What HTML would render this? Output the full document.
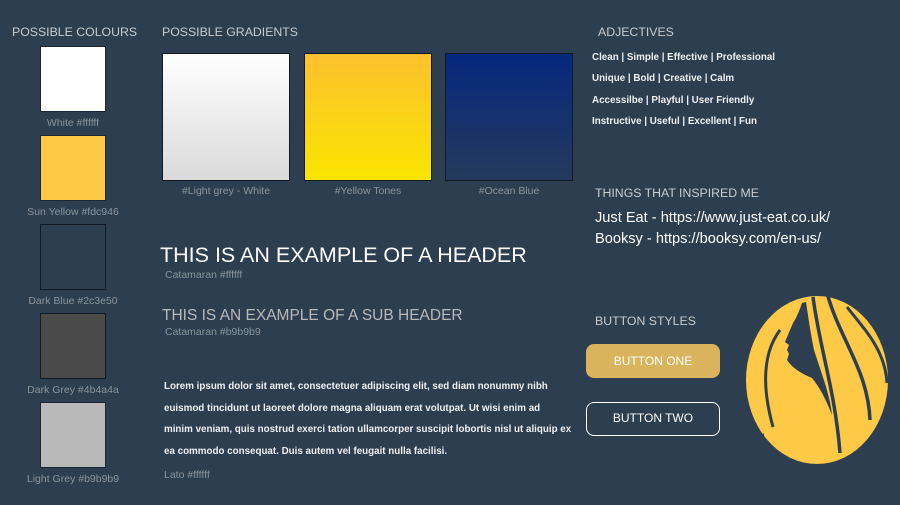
<!DOCTYPE html>
<html><head><meta charset="utf-8"><style>
*{margin:0;padding:0;box-sizing:border-box}
body{width:900px;height:505px;background:#2c3e50;position:relative;overflow:hidden;font-family:"Liberation Sans",sans-serif}
.a{position:absolute;white-space:nowrap}
.h{color:#c9ccd0;font-size:12.3px}
.cap{color:#8c949c;font-size:10.5px;text-align:center}
.sw{position:absolute;width:66px;height:66px;border:1px solid #1a2633}
.gr{position:absolute;width:128px;height:128px;border:1px solid #111a24}
.adj{color:#f0f0f0;font-size:9.8px;font-weight:bold;left:592px}
.p{color:#f0f0f0;font-size:9.8px;font-weight:bold;left:164px}
.btn{position:absolute;left:586px;width:134px;height:34px;border-radius:8px;color:#fff;font-size:12px;text-align:center;line-height:34px}
</style></head><body>
<div class="a h" style="left:12px;top:25px">POSSIBLE COLOURS</div>
<div class="a h" style="left:162px;top:25px">POSSIBLE GRADIENTS</div>
<div class="a h" style="left:598px;top:25px">ADJECTIVES</div>

<div class="sw" style="left:40px;top:46px;background:#fff"></div>
<div class="a cap" style="left:20px;width:106px;top:117px">White #ffffff</div>
<div class="sw" style="left:40px;top:135px;background:#fdc946"></div>
<div class="a cap" style="left:13px;width:120px;top:206px">Sun Yellow #fdc946</div>
<div class="sw" style="left:40px;top:224px;background:#2c3e50;border-color:#111a24"></div>
<div class="a cap" style="left:13px;width:120px;top:295px">Dark Blue #2c3e50</div>
<div class="sw" style="left:40px;top:313px;background:#4b4a4a;border-color:#111a24"></div>
<div class="a cap" style="left:13px;width:120px;top:384px">Dark Grey #4b4a4a</div>
<div class="sw" style="left:40px;top:402px;background:#b9b9b9"></div>
<div class="a cap" style="left:13px;width:120px;top:473px">Light Grey #b9b9b9</div>

<div class="gr" style="left:162px;top:53px;background:linear-gradient(#fff,#dadada)"></div>
<div class="a cap" style="left:162px;width:128px;top:185px">#Light grey - White</div>
<div class="gr" style="left:304px;top:53px;background:linear-gradient(#fcc12e,#f9e500)"></div>
<div class="a cap" style="left:304px;width:128px;top:185px">#Yellow Tones</div>
<div class="gr" style="left:445px;top:53px;background:linear-gradient(#06287f,#243a5c)"></div>
<div class="a cap" style="left:445px;width:128px;top:185px">#Ocean Blue</div>

<div class="a" style="left:160px;top:243px;color:#fff;font-size:21.5px">THIS IS AN EXAMPLE OF A HEADER</div>
<div class="a cap" style="left:165px;top:269px">Catamaran #ffffff</div>
<div class="a" style="left:162px;top:307px;color:#b9b9b9;font-size:15.5px">THIS IS AN EXAMPLE OF A SUB HEADER</div>
<div class="a cap" style="left:165px;top:326px">Catamaran #b9b9b9</div>

<div class="a p" style="top:381px">Lorem ipsum dolor sit amet, consectetuer adipiscing elit, sed diam nonummy nibh</div>
<div class="a p" style="top:403px">euismod tincidunt ut laoreet dolore magna aliquam erat volutpat. Ut wisi enim ad</div>
<div class="a p" style="top:424px">minim veniam, quis nostrud exerci tation ullamcorper suscipit lobortis nisl ut aliquip ex</div>
<div class="a p" style="top:446px">ea commodo consequat. Duis autem vel feugait nulla facilisi.</div>
<div class="a cap" style="left:164px;top:469px">Lato #ffffff</div>

<div class="a adj" style="top:52px">Clean | Simple | Effective | Professional</div>
<div class="a adj" style="top:73px">Unique | Bold | Creative | Calm</div>
<div class="a adj" style="top:95px">Accessilbe | Playful | User Friendly</div>
<div class="a adj" style="top:116px">Instructive | Useful | Excellent | Fun</div>

<div class="a h" style="left:595px;top:186px">THINGS THAT INSPIRED ME</div>
<div class="a" style="left:595px;top:210px;color:#fff;font-size:14.6px">Just Eat - https://www.just-eat.co.uk/</div>
<div class="a" style="left:595px;top:231px;color:#fff;font-size:14.6px">Booksy - https://booksy.com/en-us/</div>

<div class="a h" style="left:595px;top:314px">BUTTON STYLES</div>
<div class="btn" style="top:344px;background:#d9b45c">BUTTON ONE</div>
<div class="btn" style="top:402px;border:1.5px solid #fff;line-height:31px">BUTTON TWO</div>

<svg class="a" style="left:740px;top:290px" width="155" height="180" viewBox="0 0 155 180">
<ellipse cx="77" cy="90" rx="71" ry="84" fill="#fdc946"/>
<path d="M62 13 C58 25 55 30 53 33 L45 52 L49 55 L47 60 L49 64 L47 70 C52 78 62 84 72 88 C82 100 88 115 92 125 C90 105 82 85 74 60 C70 40 68 25 66 12 Z" fill="#2c3e50"/>
<path d="M73 7 C80 60 95 100 100 163" fill="none" stroke="#2c3e50" stroke-width="3.5"/>
<path d="M87 3 C100 50 128 80 130 130" fill="none" stroke="#2c3e50" stroke-width="3.5"/>
<path d="M107 17 C125 40 145 60 147 93" fill="none" stroke="#2c3e50" stroke-width="3"/>
<path d="M40 40 C25 60 20 90 33 137" fill="none" stroke="#2c3e50" stroke-width="3"/>
<path d="M15 133 C12 140 16 146 24 145" fill="none" stroke="#2c3e50" stroke-width="3"/>
</svg>
</body></html>
